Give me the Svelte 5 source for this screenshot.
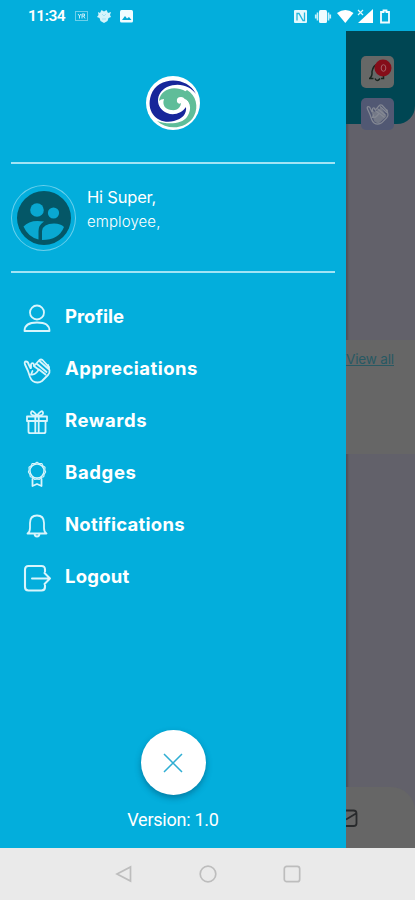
<script>
	/**
	 * @typedef {Object} MenuItem
	 * @property {string} label - Text shown next to the icon
	 * @property {string} icon - Icon name
	 * @property {string} spacing - Letter spacing of the label
	 */

	/** @type {MenuItem[]} */
	const menu = [
		{ label: 'Profile', icon: 'profile', spacing: '0px' },
		{ label: 'Appreciations', icon: 'clap', spacing: '0.45px' },
		{ label: 'Rewards', icon: 'gift', spacing: '0.55px' },
		{ label: 'Badges', icon: 'badge', spacing: '0.65px' },
		{ label: 'Notifications', icon: 'bell', spacing: '0.25px' },
		{ label: 'Logout', icon: 'logout', spacing: '0.25px' }
	];
</script>

{#snippet clap()}
	<path d="M6 15L3 8.500Q2 5.500 4 5.500T6.500 8l2 4M6 15l2 6q2 5.500 7.500 5.500 2.500 0 4.500-1.500l6-6q2-2 1.500-4.500L26 9M9 12V8.500q.500-2 2.500-1l.5 2M10.500 15l-1.500 3.500q3.500.5 5.500-2l2.500-3 6.500 5" />
	<path d="M12 10l5.500-6q1.500-1 3 0L27 11M15 8l9.500 8M18 5.500l8.500 7.500M12.500 10.500l4 3" />
{/snippet}

<div class="screen">
	<header class="status-bar">
		<span class="clock">11:34</span>
		<svg class="status-left" width="62" height="16" viewBox="0 0 62 16">
			<rect x="1.500" y="3.500" width="12" height="9" fill="none" stroke="#6bd0eb" />
			<path d="M4 6l1.500 2v2.500M7 6L5.500 8M8 10.500V6h2.500v2H8M9.500 8l1.500 2.500" fill="none" stroke="#c5eef9" />
			<path d="M24 4l2 1 1.500-3 2.500 1.500L32.500 2 34 5l3-1-1 3 1 2-2.500 1-1 3-3.500 2-3.500-2-1-3-2.500-1 1.500-2z" fill="#d5f4fb" />
			<path d="M28 6l2 2 2-2M28 11h4" fill="none" stroke="#a5e3f4" />
			<rect x="46" y="2" width="13" height="12.500" rx="1.500" fill="#f1fcff" />
			<path d="M48 12l3-4 2 2.500 2-1.500 2.500 3z" fill="#03a9d5" />
		</svg>
		<svg class="status-right" width="100" height="16" viewBox="0 0 100 16">
			<rect x="1" y="2" width="13" height="13" rx="1" fill="#e5f8fd" />
			<path d="M4 12.500v-7h2l4 7h1.500v-8" fill="none" stroke="#22b6dd" stroke-width="1.300" />
			<rect x="26" y="2" width="8" height="13" rx="1.500" fill="#f0fcff" />
			<path d="M24.500 4.500v8M35.500 4.500v8M22.700 6.500v4M37.300 6.500v4" stroke="#c9f0fa" stroke-width="1.600" />
			<path d="M44 5q8.500-6 16.500 0L52.300 15z" fill="#fff" />
			<path d="M80 1v14H65z" fill="#fff" />
			<path d="M65 2l5 5M70 2l-5 5" stroke="#dff7fd" stroke-width="1.200" />
			<path d="M88 4h2.500V2.500h3V4H96v10.500h-8z" fill="none" stroke="#f2fcff" stroke-width="1.800" />
		</svg>
	</header>

	<main>
		<aside class="drawer">
			<svg class="logo" viewBox="0 0 56 56">
				<circle cx="28" cy="28" r="27" fill="#fff" />
				<path d="M42 15C51 20 54 32 49 41 42 54 23 56 12 46 23 50 37 49 42 42 48 33 45 25 36 20Z" fill="#5fbd99" />
				<path d="M14 26C15 16 25 11 35 14 44 16 48 24 46 32 44 25 40 23 36 24 37 32 33 36 26 35 20 34 17 30 19 24Q16 24 14 26Z" fill="#5fbd99" />
				<path d="M51 19C42 1 13 1 6 20 0 38 14 50 29 46 37 44 42 39 41 32 37 38 29 41 22 38 10 33 10 18 22 12 34 7 45 11 51 19Z" fill="#17269a" />
				<path d="M32 27Q31 22 36 22 39 22 40 25 37 24 36 28 34 30 32 27Z" fill="#fff" />
			</svg>

			<section class="user">
				<div class="avatar">
					<svg viewBox="0 0 54 54">
						<circle cx="27" cy="27" r="27" fill="#045767" />
						<g fill="#09a8d1">
							<circle cx="20" cy="19" r="6.800" />
							<circle cx="36.500" cy="22" r="5.600" />
							<path d="M6.500 35.500Q13 28 27 30.500 21.500 34 21.500 40v8.500Q11 46 6.500 35.500Z" />
							<path d="M25 49V40q1-7.500 12-7.500 7 0 10 3.500Q42 49 25 49Z" />
						</g>
					</svg>
				</div>
				<div class="user-text">
					<p class="name">Hi Super,</p>
					<p class="role">employee,</p>
				</div>
			</section>

			<nav>
				{#each menu as item (item.label)}
					<button class="menu-item">
						<svg class="menu-icon" viewBox="0 0 30 30">
							{#if item.icon === 'profile'}
								<ellipse cx="15" cy="8.500" rx="7" ry="7" />
								<path d="M2.500 27q0-8.500 12.500-8.500T27.500 27z" />
							{:else if item.icon === 'clap'}
								{@render clap()}
							{:else if item.icon === 'gift'}
								<path d="M5 8.500h20v4.500H5zM6.500 13v10.500q0 1.700 1.700 1.700h13.600q1.700 0 1.700-1.700V13M13.300 8.500V25M16.700 8.500V25" />
								<path d="M15 7.500Q8 8 9 4.500t6 3M15 7.500q7 .5 6-3t-6 3" />
							{:else if item.icon === 'badge'}
								<path d="M15 2.200l2 1.300h2.800l1 2.300 2.200 1.400-.2 2.800.8 2-1.400 2.200-.5 2.500-2.500.8-1.900 1.900-2.300-.5-2.300.5-1.900-1.900-2.500-.8-.5-2.500L6.400 12l.8-2L7 7.200l2.200-1.400 1-2.300H13z" stroke-width="1.200" />
								<circle cx="15" cy="11" r="7" stroke-width="1.400" />
								<path d="M10.500 19v7l4.500-2 4.500 2v-7" />
							{:else if item.icon === 'bell'}
								<path d="M5.500 21.500Q8 20 8 16v-5q0-7.500 7-7.500T22 11v5q0 4 2.500 5.500zM12.500 21.500q0 3 2.500 3t2.500-3" />
							{:else}
								<path d="M23 7.500V5.500Q23 2 19.500 2h-13Q3 2 3 5.500V23q0 3.500 3.500 3.500h13Q23 26.500 23 23v-1.500" stroke-width="2.100" />
								<path d="M10 14.500h18M22.500 9l5.500 5.500-5.500 5.500" stroke-width="2" />
							{/if}
						</svg>
						<span style="letter-spacing: {item.spacing}">{item.label}</span>
					</button>
				{/each}
			</nav>

			<footer class="drawer-footer">
				<button class="close" aria-label="Close menu">
					<svg width="20" height="20" viewBox="0 0 20 20">
						<path d="M1 1l18 18M19 1L1 19" />
					</svg>
				</button>
				<p class="version">Version: 1.0</p>
			</footer>
		</aside>

		<!-- Dimmed page left visible beside the drawer -->
		<div class="page">
			<div class="page-header">
				<div class="tile">
					<svg width="33" height="33" viewBox="0 0 33 33">
						<path d="M8.500 22.500q3-2 2.500-7 1-6 6-7.500M8 22.500h4.500M14 22.500q2 4 5 0M20 22.500h2.500v-4" fill="none" stroke="#18251f" stroke-width="1.500" />
						<circle cx="22" cy="12" r="8.500" fill="#850d19" />
						<ellipse cx="22.500" cy="12" rx="2.300" ry="3.300" fill="none" stroke="#a56068" />
					</svg>
				</div>
				<div class="tile tile-clap">
					<svg width="25" height="25" viewBox="0 0 30 30">
						<path d="M7 9l4 14 5 3 10-9-7-10-7 5z" fill="#747987" />
						<g fill="none" stroke="#858994" stroke-width="1.500">{@render clap()}</g>
					</svg>
				</div>
			</div>
			<div class="page-card">
				<span class="view-all">View all</span>
			</div>
			<div class="tab-bar">
				<svg width="14" height="20" viewBox="0 0 14 20">
					<path d="M0 2.500h7.500q3 0 3 3v10q0 2.500-3 2.500H0M0 11.500l10-6" />
				</svg>
			</div>
		</div>
	</main>

	<div class="system-nav">
		<svg viewBox="0 0 18 18"><path d="M15.500 2v14L2 9z" /></svg>
		<svg viewBox="0 0 18 18"><circle cx="9" cy="9" r="7.800" /></svg>
		<svg viewBox="0 0 18 18"><rect x="1.300" y="1.300" width="15.400" height="15.400" rx="2.500" /></svg>
	</div>
</div>

<style>
	:global(body) {
		margin: 0;
	}

	.screen {
		display: flex;
		flex-direction: column;
		width: 415px;
		height: 900px;
		overflow: hidden;
		background: #03aedc;
		font-family: Inter, sans-serif;
		color: #fff;
	}

	p {
		margin: 0;
	}

	button {
		padding: 0;
		border: 0;
		background: none;
		color: inherit;
		font: inherit;
	}

	.status-bar {
		display: flex;
		align-items: center;
		box-sizing: border-box;
		height: 31px;
		padding: 1px 22px 0 28px;
	}

	.clock {
		width: 46px;
		font-family: Roboto, sans-serif;
		font-size: 15.5px;
		font-weight: 600;
		letter-spacing: -0.5px;
	}

	.status-right {
		margin-left: auto;
	}

	main {
		display: flex;
		height: 817px;
	}

	.drawer {
		display: flex;
		flex-direction: column;
		box-sizing: border-box;
		width: 346px;
		padding: 44px 11px 0;
	}

	.logo {
		align-self: center;
		width: 56px;
		height: 56px;
	}

	.user {
		display: flex;
		gap: 11px;
		box-sizing: border-box;
		height: 111px;
		margin-top: 31px;
		padding-top: 21px;
		border-top: 2px solid #a2e4f5;
		border-bottom: 2px solid #a2e4f5;
	}

	.avatar {
		display: flex;
		align-items: center;
		justify-content: center;
		box-sizing: border-box;
		width: 65px;
		height: 66px;
		border: 1px solid #68cfeb;
		border-radius: 50%;
	}

	.avatar svg {
		width: 54px;
		height: 54px;
	}

	.name {
		font-size: 16.5px;
		line-height: 24px;
		letter-spacing: -0.2px;
	}

	.role {
		font-size: 15px;
		font-weight: 300;
		line-height: 26px;
		letter-spacing: 0.1px;
	}

	nav {
		display: flex;
		flex-direction: column;
		margin-top: 17px;
	}

	.menu-item {
		display: flex;
		align-items: center;
		gap: 13px;
		height: 52px;
		padding-left: 11px;
		font-size: 18.5px;
		font-weight: 700;
		text-align: left;
	}

	.menu-icon {
		width: 30px;
		height: 30px;
		margin-top: 5px;
		fill: none;
		stroke: #d9f5fc;
		stroke-width: 1.8;
		stroke-linejoin: round;
		stroke-linecap: round;
	}

	.drawer-footer {
		display: flex;
		flex-direction: column;
		align-items: center;
		margin-top: 128px;
	}

	.close {
		display: flex;
		align-items: center;
		justify-content: center;
		width: 65px;
		height: 65px;
		border-radius: 50%;
		background: #fff;
		box-shadow: 0 3px 6px rgba(0, 50, 80, 0.4);
	}

	.close path {
		stroke: #2faed3;
		stroke-width: 1.5;
	}

	.version {
		margin-top: 13px;
		font-family: Roboto, sans-serif;
		font-size: 18px;
		line-height: 24px;
		letter-spacing: -0.25px;
	}

	.page {
		display: flex;
		flex-direction: column;
		width: 69px;
		background: #62616a;
		box-shadow: inset 2px 0 2px rgba(0, 0, 0, 0.18);
	}

	.page-header {
		display: flex;
		flex-direction: column;
		gap: 10px;
		box-sizing: border-box;
		height: 93px;
		padding: 25px 0 0 15px;
		border-bottom-right-radius: 18px;
		background: #004653;
	}

	.tile {
		display: flex;
		flex-shrink: 0;
		align-items: center;
		justify-content: center;
		width: 33px;
		height: 32px;
		border-radius: 5px;
		background: #666867;
	}

	.tile-clap {
		background: #515873;
	}

	.page-card {
		box-sizing: border-box;
		height: 114px;
		margin-top: 216px;
		padding-top: 9px;
		background: #666;
	}

	.view-all {
		display: block;
		font-size: 13.5px;
		line-height: 20px;
		letter-spacing: -0.15px;
		color: #285963;
		text-decoration: underline;
		white-space: nowrap;
	}

	.tab-bar {
		display: flex;
		align-items: center;
		height: 61px;
		margin-top: auto;
		border-top-right-radius: 24px;
		background: #666;
	}

	.tab-bar path {
		fill: none;
		stroke: #282a2c;
		stroke-width: 1.8;
	}

	.system-nav {
		display: flex;
		align-items: center;
		justify-content: center;
		gap: 66px;
		flex: 1;
		background: #eaeaea;
	}

	.system-nav svg {
		width: 18px;
		height: 18px;
		fill: none;
		stroke: #bdbdbd;
		stroke-width: 1.7;
	}
</style>
